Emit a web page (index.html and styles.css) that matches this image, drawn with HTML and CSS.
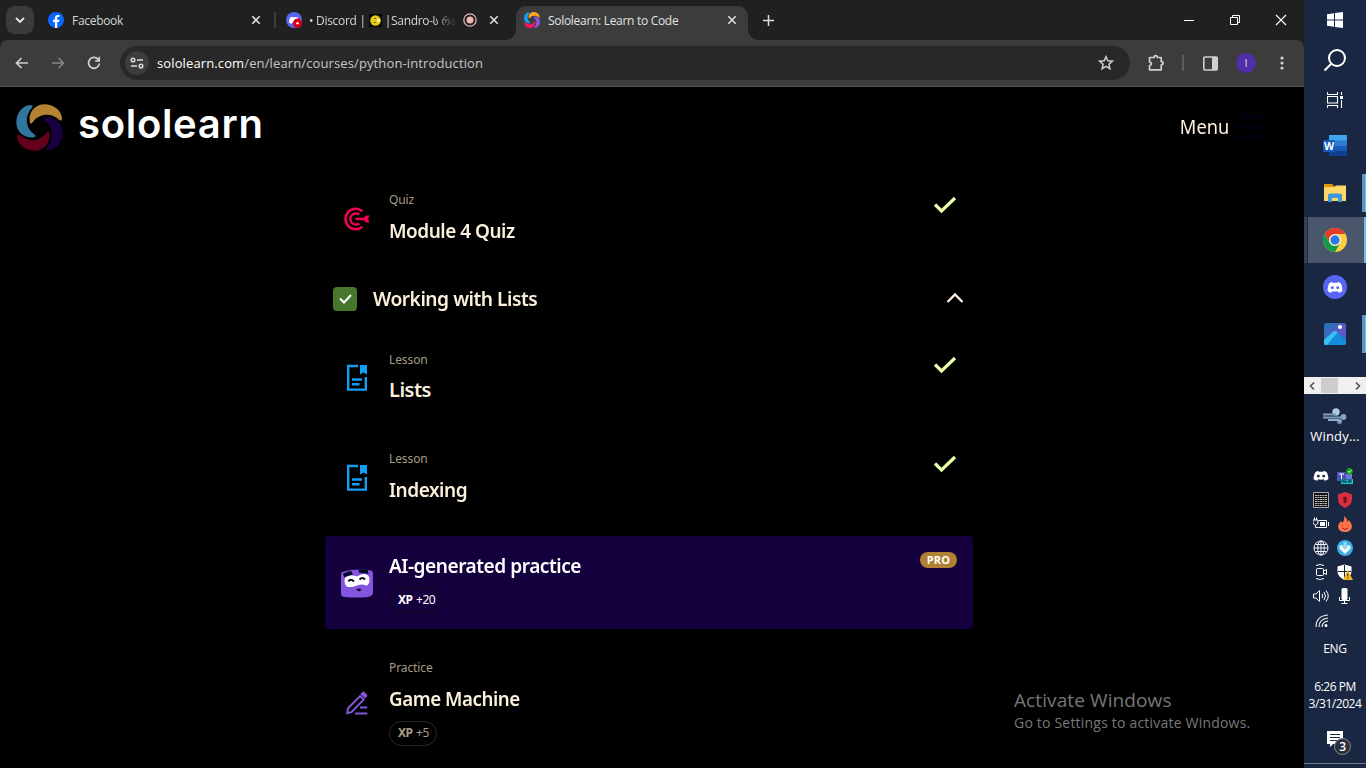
FILE: index.html
```html
<!DOCTYPE html>
<html lang="en">
<head>
<meta charset="utf-8">
<title>Sololearn: Learn to Code</title>
<link rel="stylesheet" href="styles.css">
</head>
<body>
<svg class="defs" width="0" height="0">
  <defs>
    <symbol id="close" viewBox="0 0 10 10"><path d="M1.3 1.3l7.4 7.4M8.7 1.3L1.3 8.7" stroke="#dedede" stroke-width="1.6"/></symbol>
    <symbol id="blade" viewBox="0 0 48 48"><path d="M14 18C12.500 8 20 0.300 29 0.300C39 .3 46.500 7 47 14.500Q47 18 44.500 16.500C36 8.500 24 9.500 17.500 18Q14.500 22 14 18z"/></symbol>
    <symbol id="check" viewBox="0 0 24 24"><path d="M2 11.500l6.500 6.500L22 5" fill="none" stroke="#e4ffa8" stroke-width="3.200"/></symbol>
    <symbol id="lesson" viewBox="0 0 32 32"><path d="M17 4H7.200v23.600h17.600V15M11 17.500h10M11 22.300h7.500" fill="none" stroke="#149ef2" stroke-width="2.400"/><path d="M19 3h7v9.500l-3.500-2-3.500 2z" fill="#149ef2"/></symbol>
    <symbol id="discord" viewBox="0 0 24 18"><path d="M8 1.500C5.500 2 4 3 3.500 3.500 1.500 7 .8 11 1 15c2 1.600 4 2.200 5.500 2.500l1.300-2.200q4.200 1.200 8.400 0l1.300 2.200c1.500-.3 3.500-.9 5.500-2.500.2-4-.5-8-2.500-11.500C20 3 18.500 2 16 1.500l-.8 1.500q-3.200-.5-6.400 0z" fill="#fff"/></symbol>
  </defs>
</svg>
<div class="browser">
  <div class="tabs">
    <span class="tab-search"><svg width="10" height="7" viewBox="0 0 10 7"><path d="M1 1l4 4 4-4" fill="none" stroke="#e4e4e4" stroke-width="1.900"/></svg></span>
    <div class="tab tab-fb">
      <svg class="fav" width="16" height="16" viewBox="0 0 16 16"><circle cx="8" cy="8" r="8" fill="#0866ff"/><path d="M6.900 16V10H5V7.700h1.900V6.300c0-2.400 1.200-3.400 3-3.400.7 0 1.300.1 1.600.2v2h-1c-1 0-1.300.5-1.300 1.400v1.200h2.200L11 10H9.200v6z" fill="#fff"/></svg>
      <span class="tab-name fb-name">Facebook</span>
      <svg class="x" width="10" height="10"><use href="#close"/></svg>
    </div>
    <i class="tab-sep"></i>
    <div class="tab tab-dc">
      <svg class="fav" width="17" height="16" viewBox="0 0 17 16"><circle cx="8" cy="8" r="8" fill="#5865f2"/><svg x="2.500" y="4" width="11" height="8" viewBox="0 0 24 18"><use href="#discord" width="24" height="18"/></svg><circle cx="11.500" cy="11.200" r="4.700" fill="#d50018"/><circle cx="11.500" cy="11.200" r="1.200" fill="#fff"/></svg>
      <span class="tab-name dc-name"><span>• Discord |</span><svg width="13" height="13" viewBox="0 0 13 13"><path fill="#080808" d="M0 0h13v13H0z"/><circle cx="6.500" cy="6.500" r="5.300" fill="#e6c915"/><path d="M5 4.500h2M5 8.500h2" stroke="#76620b"/><circle cx="9.500" cy="6.500" r="1.800" fill="#fff1a3"/></svg><span>|Sandro-<span class="geo">ს რა</span></span></span>
      <svg class="rec" width="14" height="14" viewBox="0 0 14 14"><circle cx="7" cy="7" r="6.200" fill="none" stroke="#e9b5b2" stroke-width="1.200"/><circle cx="7" cy="7" r="3.500" fill="#f2b8b5"/></svg>
      <svg class="x" width="10" height="10"><use href="#close"/></svg>
    </div>
    <div class="tab tab-active">
      <svg class="fav" width="16" height="16" viewBox="0 0 48 48"><use href="#blade" fill="#fda51a"/><use href="#blade" fill="#8755e8" transform="rotate(90 24 24)"/><use href="#blade" fill="#fa1464" transform="rotate(180 24 24)"/><use href="#blade" fill="#149ef2" transform="rotate(270 24 24)"/></svg>
      <span class="tab-name solo-name">Sololearn: Learn to Code</span>
      <svg class="x" width="10" height="10"><use href="#close"/></svg>
    </div>
    <svg class="plus" width="11" height="11" viewBox="0 0 11 11"><path d="M5.500 0v11M0 5.500h11" stroke="#ddd" stroke-width="1.500"/></svg>
    <div class="window-buttons">
      <svg width="12" height="12" viewBox="0 0 12 12"><path d="M1 6.500h10" stroke="#fff"/></svg>
      <svg width="12" height="12" viewBox="0 0 12 12"><path d="M1.500 3.500h7v7h-7zM3.500 3V1.500h7v7H9" fill="none" stroke="#fff"/></svg>
      <svg width="12" height="12" viewBox="0 0 12 12"><path d="M1 1l10 10M11 1L1 11" stroke="#fff" stroke-width="1.100"/></svg>
    </div>
  </div>
  <div class="toolbar-bg"><div class="toolbar">
    <svg width="14" height="12" viewBox="0 0 14 12"><path d="M13 6H1.500M6.500 1l-5 5 5 5" fill="none" stroke="#d0d0d0" stroke-width="1.700"/></svg>
    <svg class="forward" width="14" height="12" viewBox="0 0 14 12"><path d="M1 6h11.500M7.500 1l5 5-5 5" fill="none" stroke="#858585" stroke-width="1.500"/></svg>
    <svg class="reload" width="14" height="14" viewBox="0 0 14 14"><path d="M12.300 7.500A5.400 5.400 0 1 1 11 3.300l1.500 1.500" fill="none" stroke="#d0d0d0" stroke-width="1.800"/><path d="M13 .8v5H8.200v-1.600h3.200V.8z" fill="#d0d0d0"/></svg>
    <div class="address">
      <span class="site"><svg width="14" height="12" viewBox="0 0 14 12" fill="none" stroke="#dadada" stroke-width="1.500"><circle cx="3" cy="3" r="1.800"/><path d="M7 3h6M1 9h6"/><circle cx="11" cy="9" r="1.800"/></svg></span>
      <span class="url"><b>sololearn.com</b>/en/learn/courses/python-introduction</span>
      <svg class="star" width="16" height="16" viewBox="0 0 16 16"><path d="M8 1.700l1.800 4.100 4.500.4-3.400 3 1 4.400L8 11.300l-3.900 2.300 1-4.400-3.400-3 4.500-.4z" fill="none" stroke="#d0d0d0" stroke-width="1.500"/></svg>
    </div>
    <svg class="ext" width="18" height="18" viewBox="0 0 18 18"><path d="M2.500 3.500h4.600c0-2.400 3.200-2.400 3.200 0h3.900v4.100c2.400 0 2.400 3.200 0 3.200v5H2.500v-4.300c2.600-.5 2.600-3.200 0-3.700z" fill="none" stroke="#cfcfcf" stroke-width="1.700" stroke-linejoin="round"/></svg>
    <i class="tool-sep"></i>
    <svg class="side" width="15" height="15" viewBox="0 0 15 15"><rect x=".8" y="1" width="13.400" height="13" rx="1" fill="none" stroke="#cfcfcf" stroke-width="1.600"/><path d="M9 1h5v13H9z" fill="#cfcfcf"/></svg>
    <span class="avatar">I</span>
    <svg class="dots" width="4" height="14" viewBox="0 0 4 14" fill="#d0d0d0"><circle cx="2" cy="2" r="1.600"/><circle cx="2" cy="7" r="1.600"/><circle cx="2" cy="12" r="1.600"/></svg>
  </div></div>
  <main class="page">
    <header class="header">
      <svg class="brand-mark" width="47" height="47" viewBox="0 0 48 48"><use href="#blade" fill="#b48232"/><use href="#blade" fill="#190042" transform="rotate(90 24 24)"/><use href="#blade" fill="#64001b" transform="rotate(180 24 24)"/><use href="#blade" fill="#31769d" transform="rotate(270 24 24)"/></svg>
      <span class="brand">sololearn</span>
      <span class="menu">Menu</span>
      <svg class="burger" width="28" height="24" viewBox="0 0 28 24"><path d="M0 2h28M0 12h28M0 22h28" stroke="#02020f" stroke-width="4"/></svg>
    </header>
    <div class="course">
      <div class="row">
        <svg class="icon" width="32" height="32" viewBox="0 0 32 32" fill="none" stroke="#f50057" stroke-width="2.500"><path d="M21.500 8.400A10.200 10.200 0 1 0 21.500 23.600M18.300 11.500A5.600 5.600 0 1 0 18.300 20.500"/><path d="M14.500 16H24"/><path d="M21.500 16l3.500-3.500h3.500L27 16l1.500 3.500H25z" fill="#f50057" stroke="none"/></svg>
        <div class="copy"><span class="kind">Quiz</span><span class="title t-quiz">Module 4 Quiz</span></div>
        <svg class="check" width="24" height="24"><use href="#check"/></svg>
      </div>
      <div class="module">
        <span class="box"><svg width="13" height="10" viewBox="0 0 13 10"><path d="M1 4.500l4 4L12 1" fill="none" stroke="#fff" stroke-width="2"/></svg></span>
        <span class="title t-module">Working with Lists</span>
        <svg class="chev" width="18" height="12" viewBox="0 0 18 12"><path d="M1.500 10L9 2.500l7.500 7.500" fill="none" stroke="#ffefde" stroke-width="2.300"/></svg>
      </div>
      <div class="row lists">
        <svg class="icon" width="32" height="32"><use href="#lesson"/></svg>
        <div class="copy"><span class="kind">Lesson</span><span class="title t-lists">Lists</span></div>
        <svg class="check" width="24" height="24"><use href="#check"/></svg>
      </div>
      <div class="row">
        <svg class="icon" width="32" height="32"><use href="#lesson"/></svg>
        <div class="copy"><span class="kind">Lesson</span><span class="title t-index">Indexing</span></div>
        <svg class="check" width="24" height="24"><use href="#check"/></svg>
      </div>
      <div class="ai">
        <svg class="icon" width="32" height="30" viewBox="0 0 32 30"><path d="M1 3Q15-1 30 1.500q2 .5 2 4v18q0 3-5 4.500-12 1-23 0Q0 28 0 25V6q0-2 1-3z" fill="#8455df"/><path d="M3.500 11Q4 6.500 10 6.500q4-.5 6 1 4-3 8-2.500 5 1 4.500 6.500-.5 5-3.500 5-4-1.800-9 0-5 2-9 1.500-3.500-1-3.500-7z" fill="#fff"/><path d="M2 4.500l8-2.700 2 3.400-9 3zM17.500 .5l9-.2 1 4.500-9.500-1z" fill="#060a25"/><path d="M7.500 12.500q2-3.500 5.500 0M18.500 10.500q3-3 5.500 0" fill="none" stroke="#070b25" stroke-width="2"/><path d="M15 20.500q3-1.500 5-.5 0 2.500-2 2.500z" fill="#0c0b29"/></svg>
        <div class="copy"><span class="title t-ai">AI-generated practice</span><span class="xp xp-20"><b>XP</b> +20</span></div>
        <span class="pro">PRO</span>
      </div>
      <div class="game">
        <svg class="icon" width="32" height="32" viewBox="0 0 32 32"><path d="M6.200 25.200l.8-5L19.100 8.100l3.500 3.500L10.500 24.200z" fill="none" stroke="#8455df" stroke-width="2"/><path d="M19.300 6l2-2q1-1 2 0l2.600 2.600q1 1 0 2l-2 2z" fill="#8455df"/><path d="M19 19.500h7.300M14 25.500h12.300" stroke="#8455df" stroke-width="2"/></svg>
        <div class="copy"><span class="kind">Practice</span><span class="title t-game">Game Machine</span><span class="xp xp-5"><b>XP</b> +5</span></div>
      </div>
    </div>
    <div class="watermark"><span class="wm1">Activate Windows</span><span class="wm2">Go to Settings to activate Windows.</span></div>
  </main>
</div>
<aside class="taskbar">
  <div class="sys"><svg width="16" height="16" viewBox="0 0 16 16" fill="#fff"><path d="M0 2.200l7-1v6.300H0zM8 1l8-1v7.500H8zM0 8.500h7v6.300l-7-1zM8 8.500h8V16l-8-1z"/></svg></div>
  <div class="sys"><svg width="24" height="24" viewBox="0 0 24 24" fill="none" stroke="#fff" stroke-width="2"><circle cx="14" cy="10" r="8"/><path d="M8.300 15.700L1.500 22.500"/></svg></div>
  <div class="sys"><svg width="16" height="16" viewBox="0 0 16 16" fill="none" stroke="#fff" stroke-width="1.100"><path d="M.5 0v2.500h10V0M.5 16v-2.500h10V16M.5 4.500h10v6.500H.5zM14.500 0v3M14.500 8v8"/><path d="M13 4h3v3h-3z" fill="#fff" stroke="none"/></svg></div>
  <div class="app word"><svg width="24" height="22" viewBox="0 0 24 22"><path fill="#41a5ee" d="M6 0h18v6H6z"/><path fill="#2b7cd3" d="M6 5.500h18V11H6z"/><path fill="#185abd" d="M6 11h18v5.500H6z"/><path fill="#103f91" d="M6 16.500h18V21H6z"/><rect y="5" width="12" height="12" rx="1" fill="#185abd"/><text x="1" y="14.700" fill="#fff" font-family="Open Sans" font-weight="700" font-size="10.500">W</text></svg></div>
  <div class="app open"><svg width="22" height="20" viewBox="0 0 22 20"><path fill="#dd9808" d="M0 1h8l2 2v3H0z"/><path fill="#ffd766" d="M0 4h10l2-1.500h10V18H0z"/><path d="M4 19v-7q0-1.500 2-1.500h10q2 0 2 1.500v7h-4v-4H8v4z" fill="#3b98dc"/></svg></div>
  <div class="app active"><svg width="24" height="24" viewBox="0 0 24 24"><circle cx="12" cy="12" r="12" fill="#ffcd40"/><path d="M1.600 6A12 12 0 0 1 22.400 6H12a6 6 0 0 0-5.200 9z" fill="#e33b2e"/><path d="M1.600 6A12 12 0 0 0 12 24l5.200-9a6 6 0 0 1-10.400 0z" fill="#159a4c"/><circle cx="12" cy="12" r="5.800" fill="#fff"/><circle cx="12" cy="12" r="4.700" fill="#287ae6"/></svg></div>
  <div class="app"><svg width="24" height="24" viewBox="0 0 24 24"><circle cx="12" cy="12" r="12" fill="#5865f2"/><svg x="4" y="6" width="16" height="12" viewBox="0 0 24 18"><use href="#discord" width="24" height="18"/><g fill="#5865f2"><circle cx="8" cy="10" r="2.200"/><circle cx="16" cy="10" r="2.200"/></g></svg></svg></div>
  <div class="app open"><svg width="22" height="22" viewBox="0 0 22 22"><defs><linearGradient id="ph" x2="1" y2="1"><stop stop-color="#1678ba"/><stop offset=".6" stop-color="#6655c4"/><stop offset="1" stop-color="#1574ca"/></linearGradient></defs><rect width="22" height="22" rx="2.500" fill="url(#ph)"/><path d="M0 17L9 8.700q2-1.600 4 0l9 8.800V20q0 2-2 2H2q-2 0-2-2z" fill="#168cda"/><path d="M0 17L9 8.700q2-1.600 4.500.5L3 22H2q-2 0-2-2z" fill="#38c2f4"/><circle cx="16" cy="4" r="2" fill="#fff"/></svg></div>
  <div class="scrollbar"><svg width="6" height="8" viewBox="0 0 6 8"><path d="M5 .7L1.500 4 5 7.300" fill="none" stroke="#555" stroke-width="1.600"/></svg><i></i><svg class="right" width="6" height="8" viewBox="0 0 6 8"><path d="M1 .7L4.500 4 1 7.300" fill="none" stroke="#555" stroke-width="1.600"/></svg></div>
  <div class="weather"><svg width="24" height="17" viewBox="0 0 24 17" fill="none" stroke-width="1.900"><circle cx="13" cy="4" r="3.700" fill="#adc9e3" stroke="none"/><circle cx="20.500" cy="9" r="2.900" fill="#85a5c4" stroke="none"/><circle cx="16.500" cy="13.500" r="2.500" fill="#7596b7" stroke="none"/><path d="M0 6.500h13M0 9.500h20" stroke="#7d9fbc"/><path d="M5 12h10q2 0 2.500 1.500" stroke="#91afca"/></svg><span>Windy...</span></div>
  <div class="tray">
    <svg viewBox="0 0 16 16"><svg x="0" y="2" width="16" height="11" viewBox="0 0 24 18" preserveAspectRatio="none"><use href="#discord" width="24" height="18"/><g fill="#1b2742"><circle cx="8" cy="10" r="2.200"/><circle cx="16" cy="10" r="2.200"/></g></svg></svg>
    <svg viewBox="0 0 16 16"><path d="M0 4h9v9H0z" fill="#4b50bb"/><path d="M9 6h6v8H4v-2h5z" fill="#7177d8"/><path d="M2 6h5M4.500 6v5" stroke="#fff"/><circle cx="12.500" cy="3.200" r="3.200" fill="#10a316"/><path d="M11 3.200l1.200 1.200L14.500 2" fill="none" stroke="#fff"/><path d="M4 11h12v5H4z" fill="#1bcbd3"/><text x="4.500" y="15" font-family="Liberation Sans" font-size="4.500" font-weight="700" fill="#062538">NEW</text></svg>
    <svg viewBox="0 0 16 16"><path fill="#111" stroke="#aaa" d="M.5.5h15v15H.5z"/><path d="M2 3.500h12M2 5.500h12M2 7.500h12M2 9.500h12M2 11.500h12M2 13.500h12" stroke="#b9b9b9" stroke-dasharray="2 .5"/></svg>
    <svg viewBox="0 0 16 16"><path d="M8 0l7 2.500V7q0 6-7 9-7-3-7-9V2.500z" fill="#dd2d40"/><circle cx="8" cy="6.500" r="2" fill="#721321"/><path d="M7 7h2l.7 4H6.300z" fill="#721321"/></svg>
    <svg viewBox="0 0 16 16" fill="none" stroke="#fff"><path d="M5.500 4.500h8v7h-8M15.500 6v4M0 4h5v3q-1 2-2.500 2T0 7zM1.500 1.500V4M3.500 1.500V4M2.500 9v2.500h3"/><path d="M7 6h5v4H7z" fill="#fff" stroke="none"/></svg>
    <svg viewBox="0 0 16 16"><path d="M7 0q4 3 3 6l2-2q3 4 3 7-1 5-7 5t-7-5q0-3 3-6l1 2Q8 4 7 0z" fill="#ff754b"/><path d="M5 9v1M11 9v1M5 12q3 3 6 0" fill="none" stroke="#9c2540"/></svg>
    <svg viewBox="0 0 16 16" fill="none" stroke="#f3f4f6"><circle cx="8" cy="8" r="7"/><ellipse cx="8" cy="8" rx="3.300" ry="7"/><path d="M8 1v14M1 8h14M2.500 4.500h11M2.500 11.500h11"/></svg>
    <svg viewBox="0 0 16 16"><circle cx="8" cy="8" r="8" fill="#39afe5"/><path d="M8 14L2.500 8.500Q2 5 5 5l3 2 3-2q3 0 2.500 3.500z" fill="#fff"/><path d="M6.500 2h3v4H12L8 10 4 6h2.500z" fill="#9bdcf5"/></svg>
    <svg viewBox="0 0 16 16" fill="none" stroke="#fff"><rect x="3.500" y="4.500" width="7" height="7" rx="1"/><path d="M10.500 7l3-1.500v5l-3-1.500M3 1.500q4-2 8 0M3 14.500q4 2 8 0"/></svg>
    <svg viewBox="0 0 16 16"><path d="M7.500.5l7 2V7q0 6-7 9-7-3-7-9V2.500z" fill="#fff"/><path d="M7.500 1v15M1 7.500h13" stroke="#18243a"/><path d="M10.500 6L16 16H6z" fill="#f5b51e"/><path d="M10.800 9.500v3M10.800 13.500v1" stroke="#36280a"/></svg>
    <svg viewBox="0 0 16 16" fill="none" stroke="#fff"><path d="M.5 6h2.500l3.500-3.500v11L3 10H.5zM9 6q1.500 2 0 4M11 4q3 4 0 8M13 2.500q4.500 5.500 0 11"/></svg>
    <svg viewBox="0 0 16 16"><rect x="4.500" y="0" width="6" height="12" rx="1.500" fill="#fff"/><path d="M2.500 9v3.500h10V9M7.500 12.500V16M4.500 15.500h6" fill="none" stroke="#fff"/></svg>
    <svg class="wifi" viewBox="0 0 16 16" fill="none" stroke="#e9edf2" stroke-width="1.200"><path d="M3 14Q3 3 15 2M6 14q0-8 9-9M9 14q0-5 6-6"/><circle cx="13" cy="12.500" r="1.500" fill="#fff" stroke="none"/></svg>
  </div>
  <div class="lang">ENG</div>
  <div class="clock"><span>6:26 PM</span><span class="date">3/31/2024</span></div>
  <div class="notice"><svg width="26" height="25" viewBox="0 0 26 25"><path d="M0 0h16v13H6l-3 3v-3H0z" fill="#fff"/><path d="M3 3.500h10M3 6.500h10M3 9.500h7" stroke="#1b2742"/><circle cx="15.500" cy="15.500" r="8" fill="#2b303a" stroke="#858b95"/><text x="12.200" y="20" font-family="Open Sans" font-size="12" font-weight="600" fill="#fff">3</text></svg></div>
</aside>
</body>
</html>
```
FILE: styles.css
```css
* { box-sizing: border-box; }
body { margin: 0; width: 1366px; height: 768px; overflow: hidden; display: flex; background: #000; font-family: "Open Sans", "Noto Sans", sans-serif; }
svg { display: block; flex: none; }
.defs { position: absolute; }
.browser { width: 1304px; height: 768px; display: flex; flex-direction: column; }

.tabs { height: 40px; background: #1f2120; display: flex; align-items: center; flex: none; }
.tab-search { width: 28px; height: 28px; margin-left: 6px; border-radius: 9px; background: #3b3b3b; display: grid; place-items: center; }
.tab { display: flex; align-items: center; height: 34px; color: #d5d5d5; font-size: 12px; white-space: nowrap; }
.tab .x { margin-left: auto; }
.tab-fb { width: 213px; margin-left: 14px; }
.tab-name { margin-left: 8px; }
.fb-name { letter-spacing: -.3px; }
.tab-sep { width: 2px; height: 16px; margin-left: 13px; background: #3c3e3d; }
.tab-dc { width: 213px; margin-left: 10px; }
.dc-name { display: flex; align-items: center; gap: 3px; width: 149px; margin-left: 6px; margin-right: 2px; overflow: hidden; letter-spacing: -.3px; -webkit-mask-image: linear-gradient(90deg, #000 125px, transparent 149px); mask-image: linear-gradient(90deg, #000 125px, transparent 149px); }
.geo { font-family: "DejaVu Sans", sans-serif; font-size: 11px; }
.rec { margin-left: 3px; }
.tab-active { position: relative; width: 232px; height: 34px; align-self: flex-end; margin-left: 17px; padding: 0 11px 6px 8px; background: #3c3c3c; border-radius: 10px 10px 0 0; color: #e3e3e3; }
.tab-active::before, .tab-active::after { content: ""; position: absolute; bottom: 0; width: 10px; height: 10px; }
.tab-active::before { left: -10px; background: radial-gradient(circle at 0 0, transparent 9.5px, #3c3c3c 10px); }
.tab-active::after { right: -10px; background: radial-gradient(circle at 100% 0, transparent 9.5px, #3c3c3c 10px); }
.solo-name { letter-spacing: -.3px; }
.plus { margin-left: 15px; }
.window-buttons { display: flex; gap: 34px; margin-left: auto; margin-right: 17px; }

.toolbar-bg { background: #1f2120; flex: none; }
.toolbar { height: 47px; display: flex; align-items: center; padding-left: 15px; background: #3c3c3c; border-bottom: 1px solid #525252; border-radius: 8px 8px 0 0; }
.forward { margin-left: 22px; }
.reload { margin-left: 22px; }
.address { width: 1010px; height: 34px; margin-left: 19px; border-radius: 17px; background: #282828; display: flex; align-items: center; padding: 0 16px 0 5px; }
.site { width: 24px; height: 24px; border-radius: 50%; background: #3c3c3c; display: grid; place-items: center; }
.url { margin-left: 8px; color: #c7c7c7; font-size: 13px; letter-spacing: .12px; }
.url b { font-weight: 400; color: #fff; }
.star { margin-left: auto; }
.ext { margin-left: 17px; }
.tool-sep { width: 2px; height: 16px; margin-left: 17px; background: #5b5b5b; }
.side { margin-left: 19px; }
.avatar { width: 20px; height: 20px; margin-left: 18px; border-radius: 50%; background: #512da8; color: #ddd; text-align: center; font-size: 11px; line-height: 20px; }
.dots { margin-left: 24px; }

.page { height: 681px; position: relative; background: #000; font-family: "Noto Sans", sans-serif; }
.header { height: 80px; display: flex; align-items: center; padding: 0 38px 0 16px; }
.brand { margin: -7px 0 0 15px; color: #fff; font: 600 40px/48px Inter, sans-serif; letter-spacing: .7px; }
.menu { margin-left: auto; color: #fff1dd; font-size: 20px; line-height: 28px; transform: scaleX(.91); transform-origin: right; }
.burger { margin-left: 9px; }
.course { width: 648px; margin: 3px 0 0 325px; }
.row, .game { height: 99px; display: flex; align-items: flex-start; padding: 0 16px; }
.row .icon { margin-top: 33px; }
.row.lists { margin-top: 1px; }
.row.lists .icon { margin-top: 32px; }
.copy { display: flex; flex-direction: column; align-items: flex-start; margin-left: 16px; }
.kind { height: 18px; margin-top: 21px; color: #a69b83; font-size: 12px; line-height: 18px; letter-spacing: -.1px; }
.title { color: #fbf0db; font-size: 20px; line-height: 28px; font-weight: 600; white-space: nowrap; letter-spacing: -.5px; transform-origin: left; }
.t-quiz { transform: scaleX(.947); }
.t-module { transform: scaleX(.959); }
.t-index { transform: scaleX(.951); }
.t-ai { transform: scaleX(.955); }
.t-game { transform: scaleX(.937); }
.copy .kind + .title { margin-top: 8px; }
.row.lists .copy .title { margin-top: 7px; }
.check { margin: 23px 0 0 auto; }
.module { height: 60px; display: flex; align-items: center; padding: 0 9px 0 8px; }
.box { width: 24px; height: 24px; border-radius: 4px; background: #47772d; display: grid; place-items: center; }
.module .title { margin-left: 16px; }
.chev { margin-left: auto; margin-top: -2px; }
.ai { height: 93px; margin-top: 8px; padding: 16px; background: #14003d; border-radius: 4px; display: flex; align-items: flex-start; }
.ai .icon { margin-top: 17px; }
.ai .title { color: #fff; }
.xp { height: 25px; border: 1px solid #2b2925; border-radius: 13px; padding: 0 8px; color: #a99d84; font-size: 12px; line-height: 22px; white-space: nowrap; letter-spacing: -.5px; }
.xp b { font-weight: 700; margin-right: 1px; }
.xp-20 { width: 55px; margin-top: 8px; color: #fff; border-color: #121017; }
.xp-5 { width: 48px; margin-top: 8px; }
.pro { margin-left: auto; width: 37px; height: 16px; border-radius: 8px; background: #b08130; color: #fff; font: 700 11px/16px "Open Sans", sans-serif; text-align: center; letter-spacing: .2px; }
.game { margin-top: 9px; height: 131px; }
.game .icon { margin-top: 50px; }
.watermark { position: absolute; left: 1014px; top: 599px; color: #777; font-family: "Open Sans", sans-serif; display: flex; flex-direction: column; white-space: nowrap; }
.wm1 { font-size: 19px; line-height: 28px; letter-spacing: .1px; }
.wm2 { font-size: 14px; line-height: 18px; letter-spacing: .2px; }

.taskbar { width: 62px; height: 768px; background: #1a2742; color: #fff; display: flex; flex-direction: column; font-size: 12px; }
.sys { height: 40px; flex: none; display: grid; place-items: center; }
.app { position: relative; height: 47px; flex: none; display: grid; place-items: center; padding-bottom: 2px; }
.word { margin-top: 3px; }
.open::after { content: ""; position: absolute; right: 0; top: 4px; width: 4px; height: 38px; background: linear-gradient(90deg, #5e92bf 3px, #79b9ec 3px); }
.active { background: linear-gradient(90deg, #354158 3px, #202b40 3px, #202b40 4px, #4a566b 4px); background-size: 100% 46px; background-repeat: no-repeat; }
.active::after { content: ""; position: absolute; right: 0; top: 0; width: 2px; height: 46px; background: #76b9ed; }
.scrollbar { height: 17px; margin-top: 19px; flex: none; background: #f0f0f0; display: flex; align-items: center; padding: 0 5px; }
.scrollbar i { width: 17px; height: 15px; margin-left: 6px; background: #cdcdcd; }
.scrollbar .right { margin-left: auto; }
.weather { height: 54px; padding-top: 14px; flex: none; display: flex; flex-direction: column; align-items: center; font-size: 13px; line-height: 18px; letter-spacing: .2px; }
.weather span { margin-top: 2px; }
.tray { height: 168px; margin-top: 20px; padding-left: 9px; display: grid; grid-template-columns: 16px 16px; grid-auto-rows: 16px; gap: 8px; flex: none; }
.tray svg { width: 16px; height: 16px; }
.tray svg svg { height: 11px; }
.wifi { margin-top: 1px; }
.lang { margin-top: 3px; height: 20px; line-height: 20px; text-align: center; letter-spacing: -.3px; }
.clock { margin-top: 19px; display: flex; flex-direction: column; align-items: center; line-height: 17px; white-space: nowrap; letter-spacing: -.45px; }
.notice { margin-top: 19px; height: 33px; padding-left: 23px; border-bottom: 1px solid #70798a; }
```
